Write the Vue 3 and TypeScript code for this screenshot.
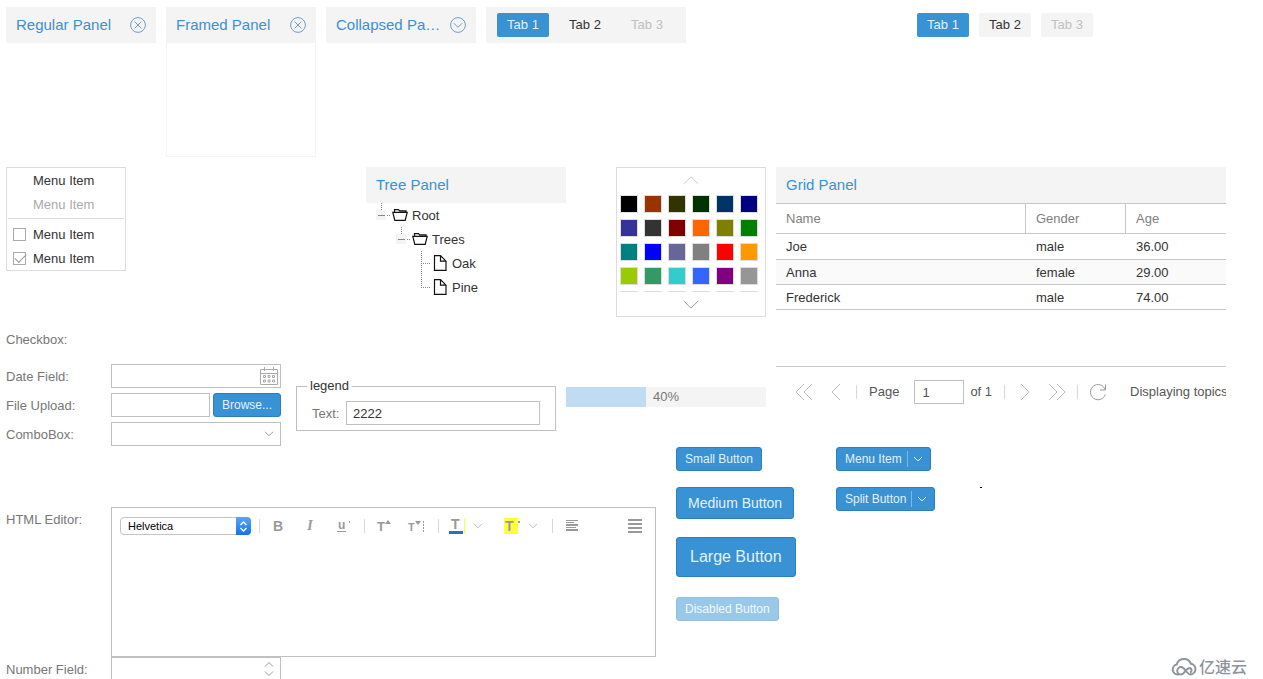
<script setup lang="ts">
import { ref } from 'vue'

interface Person {
  name: string
  gender: string
  age: string
}

const people: Person[] = [
  { name: 'Joe', gender: 'male', age: '36.00' },
  { name: 'Anna', gender: 'female', age: '29.00' },
  { name: 'Frederick', gender: 'male', age: '74.00' },
]

const swatches: string[] = [
  '#000000', '#993300', '#333300', '#003300', '#003366', '#000080',
  '#333399', '#333333', '#800000', '#ff6600', '#808000', '#008000',
  '#008080', '#0000ff', '#666699', '#808080', '#ff0000', '#ff9900',
  '#99cc00', '#339966', '#33cccc', '#3366ff', '#800080', '#969696',
  '#ffffff', '#ffffff', '#ffffff', '#ffffff', '#ffffff', '#ffffff',
]

const tabs = ['Tab 1', 'Tab 2', 'Tab 3']
const barTab = ref(0)
const plainTab = ref(0)
const pageNumber = ref('1')
const textValue = ref('2222')
const progress = ref(40)
const firstChecked = ref(false)
const secondChecked = ref(true)
</script>

<template>
  <div class="page">
    <section class="panels">
      <div class="panel">
        <header class="title-bar">
          <h2 class="title">Regular Panel</h2>
          <button class="tool" type="button" aria-label="Close">
            <svg width="16" height="16" viewBox="0 0 16 16"><circle cx="8" cy="8" r="7.4" /><path d="M4.600 4.600l6.800 6.800M11.400 4.600l-6.800 6.800" /></svg>
          </button>
        </header>
      </div>
      <div class="panel framed">
        <header class="title-bar">
          <h2 class="title">Framed Panel</h2>
          <button class="tool" type="button" aria-label="Close">
            <svg width="16" height="16" viewBox="0 0 16 16"><circle cx="8" cy="8" r="7.4" /><path d="M4.600 4.600l6.800 6.800M11.400 4.600l-6.800 6.800" /></svg>
          </button>
        </header>
      </div>
      <div class="panel">
        <header class="title-bar">
          <h2 class="title">Collapsed Panel</h2>
          <button class="tool" type="button" aria-label="Expand">
            <svg width="16" height="16" viewBox="0 0 16 16"><circle cx="8" cy="8" r="7.4" /><path d="M3.800 6.200L8 10.400l4.200-4.200" /></svg>
          </button>
        </header>
      </div>
      <nav class="tabs tab-bar">
        <button v-for="(tab, i) in tabs" :key="tab" type="button" class="tab" :class="{ active: barTab === i }" :disabled="i === 2" @click="barTab = i">{{ tab }}</button>
      </nav>
      <nav class="tabs plain-tabs">
        <button v-for="(tab, i) in tabs" :key="tab" type="button" class="tab" :class="{ active: plainTab === i }" :disabled="i === 2" @click="plainTab = i">{{ tab }}</button>
      </nav>
    </section>

    <main class="middle">
      <div class="left">
        <div class="widgets">
          <div class="menu">
            <button class="menu-item" type="button"><span>Menu Item</span></button>
            <button class="menu-item" type="button" disabled><span>Menu Item</span></button>
            <hr class="menu-line">
            <label class="menu-item"><input v-model="firstChecked" class="tick" type="checkbox"><span>Menu Item</span></label>
            <label class="menu-item"><input v-model="secondChecked" class="tick" type="checkbox"><span>Menu Item</span></label>
          </div>

          <div class="tree">
            <header class="title-bar"><h2 class="title">Tree Panel</h2></header>
            <ul class="nodes">
              <li class="node">
                <svg width="20" height="24" viewBox="0 0 20 24"><path class="dots" d="M9.500 0v8M15 12.500h4" /><path class="knob" d="M4 7h10v10H4z" /><path class="minus" d="M6 12.500h7" /></svg>
                <svg class="glyph" width="16" height="16" viewBox="0 0 16 16"><path d="M2.500 5V2.600h4l1.200 1.200h6.300V5M.8 5.300h14.400l-2 8H2.800z" /></svg>
                <span>Root</span>
              </li>
              <li class="node level-2">
                <svg width="20" height="24" viewBox="0 0 20 24"><path class="dots" d="M9.500 0v8M15 12.500h4" /><path class="knob" d="M4 7h10v10H4z" /><path class="minus" d="M6 12.500h7" /></svg>
                <svg class="glyph" width="16" height="16" viewBox="0 0 16 16"><path d="M2.500 5V2.600h4l1.200 1.200h6.300V5M.8 5.300h14.400l-2 8H2.800z" /></svg>
                <span>Trees</span>
              </li>
              <li class="node level-3">
                <svg width="20" height="24" viewBox="0 0 20 24"><path class="dots" d="M9.500 0v24M11 12.500h8" /></svg>
                <svg class="glyph" width="16" height="16" viewBox="0 0 16 16"><path d="M2.500.7h6l5.500 5.500v9.100H2.500zM8.500.7v5.500H14" /></svg>
                <span>Oak</span>
              </li>
              <li class="node level-3">
                <svg width="20" height="24" viewBox="0 0 20 24"><path class="dots" d="M9.500 0v13M11 12.500h8" /></svg>
                <svg class="glyph" width="16" height="16" viewBox="0 0 16 16"><path d="M2.500.7h6l5.500 5.500v9.100H2.500zM8.500.7v5.500H14" /></svg>
                <span>Pine</span>
              </li>
            </ul>
          </div>

          <div class="picker">
            <button class="scroller faint" type="button" aria-label="Scroll up"><svg width="16" height="9" viewBox="0 0 16 9"><path d="M.8 8L8 .9 15.200 8" /></svg></button>
            <div class="swatches">
              <button v-for="(color, i) in swatches" :key="i" type="button" class="swatch" :aria-label="color" :style="{ backgroundColor: color }"></button>
            </div>
            <button class="scroller" type="button" aria-label="Scroll down"><svg width="16" height="9" viewBox="0 0 16 9"><path d="M.8 1L8 8.100 15.200 1" /></svg></button>
          </div>
        </div>

        <div class="forms">
          <form class="fields" @submit.prevent>
            <div class="field first"><span class="label">Checkbox:</span></div>
            <div class="field">
              <label class="label" for="date">Date Field:</label>
              <div class="control">
                <input id="date" class="box" type="text">
                <svg class="trigger" width="18" height="18" viewBox="0 0 18 18" fill="none" stroke="#aaa">
                  <path d="M.5 2.500h17v15H.5zM.5 6.500h17M4.500 0v4M13.500 0v4" />
                  <path d="M3.500 8.500h2v2h-2zM8 8.500h2v2H8zM12.500 8.500h2v2h-2zM3.500 13h2v2h-2zM8 13h2v2H8zM12.500 13h2v2h-2z" />
                </svg>
              </div>
            </div>
            <div class="field">
              <label class="label" for="file">File Upload:</label>
              <div class="control upload">
                <input id="file" class="box" type="text" readonly>
                <button class="button" type="button">Browse...</button>
              </div>
            </div>
            <div class="field">
              <label class="label" for="combo">ComboBox:</label>
              <div class="control">
                <select id="combo" class="box"><option></option></select>
                <svg class="trigger chevron" width="10" height="6" viewBox="0 0 10 6"><path d="M1 .8l4 4 4-4" /></svg>
              </div>
            </div>
          </form>

          <fieldset class="group">
            <legend>legend</legend>
            <div class="group-row">
              <label class="label" for="text">Text:</label>
              <input id="text" v-model="textValue" class="box" type="text">
            </div>
          </fieldset>

          <div class="progress" role="progressbar" :aria-valuenow="progress" aria-valuemin="0" aria-valuemax="100">
            <div class="progress-fill" :style="{ width: progress + '%' }"></div>
            <span>{{ progress }}%</span>
          </div>
        </div>
      </div>

      <div class="grid-panel">
        <header class="title-bar"><h2 class="title">Grid Panel</h2></header>
        <div class="grid-body">
          <table>
            <thead>
              <tr><th>Name</th><th class="narrow">Gender</th><th class="narrow">Age</th></tr>
            </thead>
            <tbody>
              <tr v-for="person in people" :key="person.name">
                <td>{{ person.name }}</td><td>{{ person.gender }}</td><td>{{ person.age }}</td>
              </tr>
            </tbody>
          </table>
        </div>
        <footer class="pager">
          <button type="button" aria-label="First page"><svg width="18" height="18" viewBox="0 0 18 18"><path d="M9 1L1 9l8 8M17 1L9 9l8 8" /></svg></button>
          <button type="button" aria-label="Previous page"><svg width="18" height="18" viewBox="0 0 18 18"><path d="M13 1L5 9l8 8" /></svg></button>
          <i class="line"></i>
          <label class="page-label" for="page-number">Page</label>
          <input id="page-number" v-model="pageNumber" class="box page-number" type="text">
          <span class="page-count">of 1</span>
          <i class="line"></i>
          <button type="button" aria-label="Next page"><svg width="18" height="18" viewBox="0 0 18 18"><path d="M5 1l8 8-8 8" /></svg></button>
          <button type="button" aria-label="Last page"><svg width="18" height="18" viewBox="0 0 18 18"><path d="M1 1l8 8-8 8M9 1l8 8-8 8" /></svg></button>
          <i class="line"></i>
          <button class="refresh" type="button" aria-label="Refresh"><svg width="18" height="18" viewBox="0 0 18 18"><path d="M16.500 1.500v5.500H11M16.200 6.500A7.600 7.600 0 1 0 16.300 11.500" /></svg></button>
          <span class="status">Displaying topics 1 - 3 of 3</span>
        </footer>
      </div>
    </main>

    <section class="bottom">
      <div class="editor-fields">
        <div class="editor-field">
          <label class="label" for="editor">HTML Editor:</label>
          <div class="editor">
            <div class="toolbar">
              <div class="font">
                <select aria-label="Font"><option>Helvetica</option></select>
                <span class="font-arrows"><svg width="9" height="11" viewBox="0 0 9 11"><path d="M1.500 4l3-3 3 3M1.500 7l3 3 3-3" /></svg></span>
              </div>
              <i class="line"></i>
              <button class="format" type="button" aria-label="Bold"><b>B</b></button>
              <button class="format" type="button" aria-label="Italic"><em>I</em></button>
              <button class="format" type="button" aria-label="Underline"><svg width="16" height="16" viewBox="0 0 16 16"><text x="4" y="11" font-size="12">u</text><path d="M3 13h9v1H3zM15 3h1v2h-1z" /></svg></button>
              <i class="line"></i>
              <button class="format" type="button" aria-label="Grow text"><svg width="16" height="16" viewBox="0 0 16 16"><text x="1" y="13" font-size="13">T</text><path d="M9 6l3-4 3 4z" /></svg></button>
              <button class="format" type="button" aria-label="Shrink text"><svg width="16" height="16" viewBox="0 0 16 16"><text x="0" y="13" font-size="11">T</text><path d="M7 3h6l-3 4zM15 3h1v2h-1zM15 6h1v2h-1zM15 9h1v2h-1zM15 12h1v2h-1z" /></svg></button>
              <i class="line"></i>
              <button class="format color" type="button" aria-label="Text color"><svg width="16" height="16" viewBox="0 0 16 16"><text x="2" y="11" font-size="14">T</text><path fill="#2675b8" d="M0 13h14v3H0z" /><path fill="#ffff3c" d="M15 0h1v16h-1z" /></svg><svg class="chevron" width="10" height="6" viewBox="0 0 10 6"><path d="M1 .8l4 4 4-4" /></svg></button>
              <button class="format color" type="button" aria-label="Highlight color"><svg width="16" height="16" viewBox="0 0 16 16"><path fill="#ffff3c" d="M0 0h14v16H0z" /><text x="1" y="13" font-size="14">T</text><path d="M14 3h2v2h-2z" /></svg><svg class="chevron" width="10" height="6" viewBox="0 0 10 6"><path d="M1 .8l4 4 4-4" /></svg></button>
              <i class="line"></i>
              <button class="format" type="button" aria-label="Align left"><svg width="16" height="16" viewBox="0 0 16 16"><path d="M2 2h12v1H2zM2 4h8v1H2zM2 6h12v2H2zM2 9h10v1H2zM2 11h12v2H2z" /></svg></button>
              <button class="format last" type="button" aria-label="More"><svg width="14" height="16" viewBox="0 0 14 16"><path d="M0 1h14v2H0zM0 5h14v2H0zM0 9h14v2H0zM0 13h14v2H0z" /></svg></button>
            </div>
            <textarea id="editor"></textarea>
          </div>
        </div>
        <div class="field">
          <label class="label" for="number">Number Field:</label>
          <div class="control">
            <input id="number" class="box" type="text" inputmode="decimal">
            <svg class="trigger spin" width="10" height="16" viewBox="0 0 10 16"><path d="M1 5.500l4-4 4 4M1 10.500l4 4 4-4" /></svg>
          </div>
        </div>
      </div>

      <div class="buttons">
        <button class="button" type="button">Small Button</button>
        <button class="button medium" type="button">Medium Button</button>
        <button class="button large" type="button">Large Button</button>
        <button class="button" type="button" disabled>Disabled Button</button>
      </div>

      <div class="buttons splits">
        <button class="button split" type="button">Menu Item<svg width="16" height="16" viewBox="0 0 16 16"><path class="divider" d="M.5 0v16" /><path d="M7 6l4 4 4-4" /></svg></button>
        <button class="button split" type="button">Split Button<svg width="16" height="16" viewBox="0 0 16 16"><path class="divider" d="M.5 0v16" /><path d="M7 6l4 4 4-4" /></svg></button>
      </div>
      <i class="speck"></i>
    </section>

    <div class="brand">
      <svg width="26" height="20" viewBox="0 0 26 20" fill="none" stroke="#8f949c" stroke-width="2">
        <path d="M8 18.500H6.500a5 5 0 0 1-.8-9.900A7.500 7.500 0 0 1 20 7.800a5.400 5.400 0 0 1-.5 10.700c-4 0-5.500-7.500-9.500-7.500a3.700 3.700 0 0 0 0 7.500c3.500 0 4.500-6.500 9-6.500a2.400 2.400 0 0 1 0 4.500" />
      </svg>
      <span>亿速云</span>
    </div>
  </div>
</template>

<style>
body {
  background: #fff;
}
</style>

<style scoped>
* {
  box-sizing: border-box;
}

.page {
  position: relative;
  height: 100vh;
  padding: 7px 37px 0 6px;
  overflow: hidden;
  color: #333;
  font: 13px/16px "Liberation Sans", Arial, "Noto Sans CJK SC", sans-serif;
}

button,
input,
select,
textarea {
  margin: 0;
  padding: 0;
  border: 0;
  border-radius: 0;
  background: none;
  color: inherit;
  font: inherit;
}

svg {
  flex: none;
  display: block;
  overflow: visible;
}

.panels {
  display: flex;
  align-items: flex-start;
  gap: 10px;
}

.panel {
  flex: 0 0 150px;
  min-width: 0;
}

.framed {
  min-height: 150px;
  border: 1px solid #f4f4f4;
  border-top: 0;
}

.framed .title-bar {
  margin: 0 -1px;
}

.title-bar {
  display: flex;
  align-items: center;
  justify-content: space-between;
  gap: 8px;
  height: 36px;
  padding: 0 10px;
  background: #f4f4f4;
}

.title {
  min-width: 0;
  margin: 0;
  overflow: hidden;
  color: #3892d3;
  font-size: 15px;
  font-weight: 300;
  line-height: 20px;
  text-overflow: ellipsis;
  white-space: nowrap;
}

.tool svg {
  fill: none;
  stroke: #6f9fca;
}

.tabs {
  display: flex;
  align-items: center;
  gap: 10px;
  height: 36px;
}

.tab-bar {
  flex: 0 0 200px;
  padding: 0 11px;
  background: #f4f4f4;
}

.plain-tabs {
  margin-left: 221px;
}

.tab {
  width: 52px;
  height: 24px;
  border-radius: 2px;
  background: #f4f4f4;
}

.tab.active {
  background: #3892d3;
  color: #e4f1fa;
}

.tab:disabled {
  color: #c0c0c0;
}

.middle {
  display: flex;
  gap: 10px;
  margin-top: 10px;
}

.left {
  flex: 0 0 760px;
}

.widgets {
  display: flex;
  align-items: flex-start;
}

.menu {
  width: 120px;
  border: 1px solid #ddd;
}

.menu-item {
  display: flex;
  align-items: center;
  gap: 7px;
  width: 100%;
  height: 24px;
  padding-left: 6px;
}

button.menu-item {
  padding: 0 0 0 26px;
}

.menu-item span,
.node span {
  padding-top: 2px;
}

.menu-item:disabled {
  color: #aaa;
}

.menu-line {
  height: 1px;
  margin: 2px 1px 3px;
  border: 0;
  background: #ddd;
}

.tick {
  appearance: none;
  width: 13px;
  height: 13px;
  border: 1px solid #aaa;
}

.tick:checked::after {
  content: "";
  display: block;
  width: 10px;
  height: 5px;
  margin: 1px 0 0 1px;
  border: solid #999;
  border-width: 0 0 1px 1px;
  transform: rotate(-45deg);
}

.tree {
  width: 200px;
  margin-left: 240px;
}

.nodes {
  margin: 0;
  padding: 0 0 0 6px;
  list-style: none;
}

.node {
  display: flex;
  align-items: center;
  height: 24px;
}

.node span {
  margin-left: 4px;
}

.level-2 {
  padding-left: 20px;
}

.level-3 {
  padding-left: 40px;
}

.dots {
  stroke: #888;
  stroke-dasharray: 1 1;
}

.knob {
  fill: #f4f4f4;
}

.minus {
  stroke: #888;
}

.glyph {
  fill: none;
  stroke: #111;
  stroke-width: 1.2;
}

.picker {
  width: 150px;
  height: 150px;
  margin-left: 50px;
  border: 1px solid #ddd;
}

.scroller {
  display: flex;
  align-items: center;
  justify-content: center;
  width: 100%;
  height: 24px;
}

.scroller svg {
  fill: none;
  stroke: #999;
}

.scroller.faint svg {
  stroke: #ccc;
}

.swatches {
  display: grid;
  grid-template-columns: repeat(6, 18px);
  gap: 6px;
  height: 100px;
  padding: 3px 3px 0;
  overflow: hidden;
}

.swatch {
  height: 18px;
  border: 1px solid #ddd;
}

.forms {
  display: flex;
  align-items: flex-start;
  margin-top: 10px;
}

.fields {
  width: 275px;
}

.field {
  display: flex;
  align-items: center;
  width: 275px;
}

.fields .field {
  margin-bottom: 5px;
}

.fields .first {
  height: 24px;
  margin-bottom: 13px;
}

.label {
  flex: 0 0 105px;
  padding-top: 2px;
  color: #777;
}

.control {
  position: relative;
  display: flex;
  flex: 1;
  min-width: 0;
}

.box {
  appearance: none;
  flex: 1;
  min-width: 0;
  height: 24px;
  padding: 0 6px;
  border: 1px solid #c0c0c0;
  background: #fff;
}

.trigger {
  position: absolute;
  top: 3px;
  right: 3px;
  pointer-events: none;
}

.trigger.chevron {
  top: 9px;
  right: 7px;
}

.trigger.spin {
  top: 4px;
  right: 7px;
}

.chevron,
.spin {
  fill: none;
  stroke: #999;
}

.upload {
  gap: 3px;
}

.group {
  width: 260px;
  min-width: 0;
  margin: 51px 0 0 15px;
  padding: 7px 15px 5px;
  border: 1px solid #c0c0c0;
}

.group legend {
  margin-left: -5px;
  padding: 0 3px;
}

.group-row {
  display: flex;
  align-items: center;
}

.group .label {
  flex-basis: 34px;
}

.progress {
  display: flex;
  align-items: center;
  width: 200px;
  height: 20px;
  margin: 60px 0 0 10px;
  background: #f4f4f4;
  color: #777;
}

.progress-fill {
  height: 100%;
  margin-right: 7px;
  background: #c0dcf2;
}

.grid-panel {
  flex: 1;
  min-width: 0;
}

.grid-body {
  min-height: 163px;
}

table {
  width: 100%;
  border-collapse: separate;
  border-spacing: 0;
  table-layout: fixed;
}

th,
td {
  height: 25px;
  padding: 1px 10px 0;
  border-bottom: 1px solid #c8c8c8;
  font-weight: 400;
  text-align: left;
}

th {
  height: 31px;
  padding: 0 10px;
  border-top: 1px solid #c8c8c8;
  color: #808080;
}

th:not(:last-child) {
  border-right: 1px solid #c8c8c8;
}

tbody tr:first-child td {
  height: 26px;
}

.narrow {
  width: 100px;
}

tbody tr:nth-child(even) {
  background: #fafafa;
}

.pager {
  display: flex;
  align-items: center;
  height: 51px;
  padding-left: 16px;
  border-top: 1px solid #c8c8c8;
  overflow: hidden;
  color: #555;
  white-space: nowrap;
}

.pager button {
  display: flex;
  flex: 0 0 24px;
  justify-content: center;
  margin-right: 8px;
}

.pager svg {
  fill: none;
  stroke: #bbb;
}

.line {
  flex: none;
  width: 1px;
  height: 14px;
  background: #d8d8d8;
}

.page-label {
  margin-left: 12px;
}

.page-number {
  flex: 0 0 50px;
  margin: 0 6px 0 15px;
  padding: 0 7px;
}

.page-count {
  margin-right: 12px;
}

.page-count + .line {
  margin-right: 8px;
}

.pager .refresh {
  margin: 0 20px 0 8px;
}

.pager .refresh svg {
  stroke: #999;
}

.status {
  flex: 1;
  min-width: 0;
  overflow: hidden;
}

.bottom {
  display: flex;
  align-items: flex-start;
}

.middle + .bottom {
  margin-top: -4px;
}

.editor-fields {
  width: 650px;
  margin-top: 60px;
}

.editor-field {
  display: flex;
  align-items: flex-start;
}

.editor-field > .label {
  padding-top: 5px;
}

.editor {
  flex: 1;
  min-width: 0;
  height: 150px;
  border: 1px solid #c0c0c0;
}

.editor textarea {
  display: block;
  width: 100%;
  height: 110px;
  resize: none;
}

.toolbar {
  display: flex;
  align-items: center;
  height: 36px;
  padding-left: 8px;
}

.font {
  position: relative;
  width: 131px;
  height: 18px;
  margin-right: 8px;
}

.font + .line {
  margin-right: 1px;
}

.font select {
  appearance: none;
  display: block;
  width: 100%;
  height: 18px;
  padding: 0 7px;
  border: 1px solid #c4c4c4;
  border-radius: 4px;
  color: #000;
  font-size: 11px;
  line-height: 16px;
}

.font-arrows {
  position: absolute;
  top: 0;
  right: 0;
  display: flex;
  align-items: center;
  justify-content: center;
  width: 15px;
  height: 18px;
  border-radius: 0 4px 4px 0;
  background: linear-gradient(#5aa7f8, #1470f0);
  pointer-events: none;
}

.font-arrows svg {
  fill: none;
  stroke: #fff;
  stroke-width: 1.4;
}

.format {
  display: flex;
  align-items: center;
  justify-content: center;
  width: 32px;
  height: 24px;
  margin: 0 1px;
  color: #999;
  font-size: 14px;
}

.format em {
  font-family: "Liberation Serif", serif;
  font-weight: 700;
}

.format svg:not(.chevron) {
  fill: #999;
  font-weight: 700;
}

.format .chevron {
  stroke: #bbb;
}

.format + .format {
  margin-left: -1px;
}

.format + .line {
  margin: 0 2px 0 5px;
}

.format.color {
  gap: 8px;
  width: 48px;
  margin: 0 6px 0 1px;
}

.format.color + .line {
  margin-left: 1px;
}

.format.last {
  margin-left: 30px;
}

.buttons {
  display: flex;
  flex-direction: column;
  align-items: flex-start;
  width: 160px;
  margin-left: 20px;
}

.button {
  height: 24px;
  padding: 0 8px;
  border: 1px solid #2a7fc0;
  border-radius: 3px;
  background: #3892d3;
  color: #e4f1fa;
  font-size: 12px;
  white-space: nowrap;
}

.button.medium {
  height: 32px;
  margin-top: 16px;
  padding: 0 11px;
  font-size: 14px;
}

.button.large {
  height: 40px;
  margin: 18px 0 20px;
  padding: 0 13px;
  font-size: 16px;
}

.button:disabled {
  opacity: 0.5;
}

.splits {
  gap: 16px;
  width: 144px;
  margin-left: 0;
}

.split {
  display: flex;
  align-items: center;
  gap: 5px;
  padding-right: 7px;
}

.split svg {
  fill: none;
  stroke: #e4f1fa;
}

.split .divider {
  stroke: #7ab7e3;
}

.speck {
  width: 2px;
  height: 1px;
  margin-top: 40px;
  background: #000;
}

.brand {
  position: absolute;
  right: 16px;
  bottom: 3px;
  display: flex;
  align-items: center;
  gap: 2px;
  color: #8f949c;
  font: 500 16px/20px "Noto Sans CJK SC", sans-serif;
}
</style>
